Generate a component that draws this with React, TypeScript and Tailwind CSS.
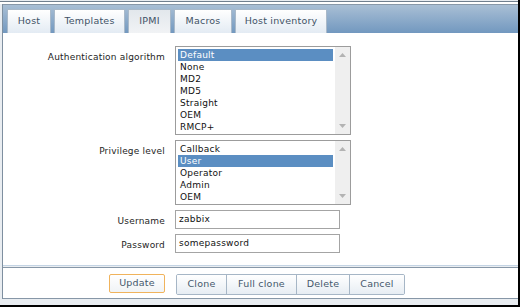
import React from "react";

const Tab = ({ label, w, active }: { label: string; w: string; active?: boolean }) => (
  <div
    className={
      "h-[24px] flex items-center justify-center border border-b-0 border-[#a9b9c9] text-[9.5px] tracking-[0.2px] text-[#3f5266] " +
      w +
      " " +
      (active
        ? "bg-gradient-to-b from-[#e2e7ec] to-[#f1f3f5]"
        : "bg-gradient-to-b from-[#ffffff] to-[#e3ebf3]")
    }
  >
    {label}
  </div>
);

const ListBox = ({ items, selected }: { items: string[]; selected: number }) => (
  <div className="w-[176px] border border-[#9c9c9c] bg-white flex pt-[2px] pb-[1px] pl-[2px]">
    <div className="w-[155px] flex flex-col">
      {items.map((it, i) => (
        <div
          key={it}
          className={
            "h-[12px] leading-[12px] pl-[2px] text-[9px] tracking-[0.25px] " +
            (i === selected ? "bg-[#5b8ec2] text-white" : "text-[#111]")
          }
        >
          {it}
        </div>
      ))}
    </div>
    <div className="ml-[2px] -mt-[2px] -mb-[1px] w-[15px] bg-[#efefef] flex flex-col justify-between items-center py-[6px]">
      <svg width="7" height="4" viewBox="0 0 7 4">
        <polygon points="0,4 7,4 3.5,0" fill="#b3b3b3" />
      </svg>
      <svg width="7" height="4" viewBox="0 0 7 4">
        <polygon points="0,0 7,0 3.5,4" fill="#b3b3b3" />
      </svg>
    </div>
  </div>
);

const Label = ({ children }: { children: React.ReactNode }) => (
  <div className="text-right pt-[5px] text-[9px] leading-[12px] tracking-[0.2px] text-[#1e1e1e]">{children}</div>
);

const Input = ({ value }: { value: string }) => (
  <div className="w-[165px] h-[19px] border border-[#a4a4a4] bg-white pl-[3px] flex items-center text-[9px] tracking-[0.25px] text-[#111]">
    {value}
  </div>
);

const Btn = ({
  label,
  w,
  cls,
}: {
  label: string;
  w: string;
  cls?: string;
}) => (
  <div
    className={
      "h-[19px] flex items-center justify-center text-[9.5px] tracking-[0.2px] text-[#45586c] bg-gradient-to-b from-[#ffffff] to-[#e7edf3] " +
      w +
      " " +
      (cls || "")
    }
  >
    {label}
  </div>
);

export default function App() {
  return (
    <div
      className="w-[520px] h-[307px] bg-[#e9edf1] border-r-2 border-b-2 border-black overflow-hidden"
      style={{ fontFamily: "'DejaVu Sans', Verdana, sans-serif" }}
    >
      <div className="h-[1px] mt-[1px] bg-[#707f8e]" />
      <div className="h-[2px] bg-white" />
      <div className="ml-[2px] border-l border-[#7e8fa0]">
        <div className="border-t border-[#8898a8]" />
        <div className="h-[28px] bg-gradient-to-b from-[#a9bfd5] to-[#7298bf] flex items-end pl-[4px] gap-[3px]">
          <Tab label="Host" w="w-[44px]" />
          <Tab label="Templates" w="w-[71px]" />
          <Tab label="IPMI" w="w-[43px]" active />
          <Tab label="Macros" w="w-[58px]" />
          <Tab label="Host inventory" w="w-[92px]" />
        </div>
        <div className="h-[233px] bg-white border-b border-[#c4d4e4] pt-[13px]">
          <div className="grid grid-cols-[162px_auto] gap-x-[10px] gap-y-[5px]">
            <Label>Authentication algorithm</Label>
            <ListBox
              items={["Default", "None", "MD2", "MD5", "Straight", "OEM", "RMCP+"]}
              selected={0}
            />
            <Label>Privilege level</Label>
            <ListBox items={["Callback", "User", "Operator", "Admin", "OEM"]} selected={1} />
            <Label>Username</Label>
            <Input value="zabbix" />
            <Label>Password</Label>
            <Input value="somepassword" />
          </div>
        </div>
        <div className="h-[1px]" />
        <div className="h-[32px] bg-white border-t border-b border-[#8797a7] flex items-start pt-[6px] pl-[106px]">
          <Btn
            label="Update"
            w="w-[56px]"
            cls="border border-[#f0b35c] rounded-[2px] from-[#fdfdfd] to-[#f0f3f6]"
          />
          <div className="ml-[11px] flex border border-[#a6b6c6] rounded-[2px] overflow-hidden">
            <Btn label="Clone" w="w-[49px]" />
            <Btn label="Full clone" w="w-[70px]" cls="border-l border-[#a6b6c6]" />
            <Btn label="Delete" w="w-[53px]" cls="border-l border-[#a6b6c6]" />
            <Btn label="Cancel" w="w-[55px]" cls="border-l border-[#a6b6c6]" />
          </div>
        </div>
      </div>
    </div>
  );
}
